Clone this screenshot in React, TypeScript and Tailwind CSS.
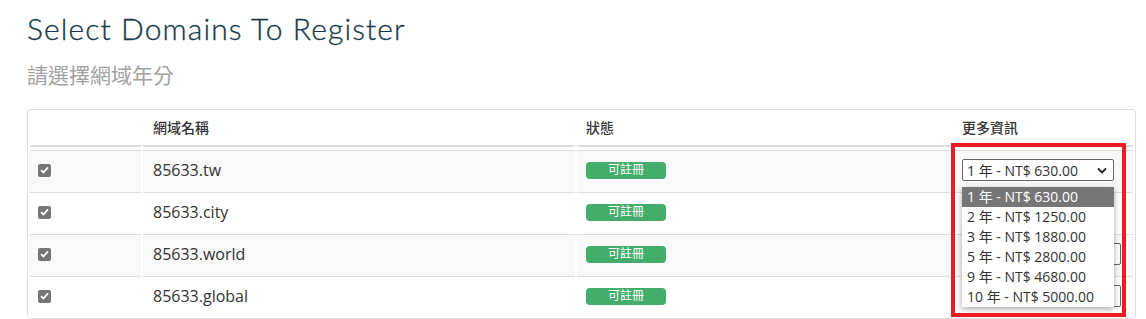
import React from "react";

const domains = [
  { name: "85633.tw", wide: false },
  { name: "85633.city", wide: false },
  { name: "85633.world", wide: true },
  { name: "85633.global", wide: true },
];

const options = [
  "1 年 - NT$ 630.00",
  "2 年 - NT$ 1250.00",
  "3 年 - NT$ 1880.00",
  "5 年 - NT$ 2800.00",
  "9 年 - NT$ 4680.00",
  "10 年 - NT$ 5000.00",
];

const Chevron = () => (
  <svg width="10" height="7" viewBox="0 0 10 7" className="shrink-0">
    <path d="M1 1.5 L5 5.5 L9 1.5" fill="none" stroke="#222" strokeWidth="1.8" />
  </svg>
);

const Check = () => (
  <span className="flex h-[13px] w-[13px] items-center justify-center rounded-[2px] bg-[#767676]">
    <svg width="9" height="8" viewBox="0 0 9 8">
      <path d="M1 4.2 L3.4 6.5 L8 1.3" fill="none" stroke="#fff" strokeWidth="1.8" />
    </svg>
  </span>
);

const App = () => {
  return (
    <div className="relative h-[319px] w-[1146px] overflow-hidden bg-white font-['Open_Sans','Noto_Sans_CJK_TC',sans-serif]">
      <div className="pl-[27px] pr-[10px]">
        <h1 className="pt-[10px] font-['Lato',sans-serif] text-[30px] font-light leading-[36px] tracking-[1.1px] text-[#173849] [-webkit-text-stroke:0.3px_#173849]">
          Select Domains To Register
        </h1>
        <p className="mt-[15px] text-[21px] leading-[28px] text-[#a2a2a2]">請選擇網域年分</p>

        <div className="mt-[20px] w-[1109px] rounded-[4px] border border-[#dddddd] px-[2px]">
          <div className="grid h-[37px] grid-cols-[111px_432px_373px_181px] gap-x-[2px] text-[14px] font-medium text-[#333]">
            <div className="border-b-2 border-[#dddddd]" />
            <div className="flex items-center border-b-2 border-[#dddddd] pl-[10px]">網域名稱</div>
            <div className="flex items-center border-b-2 border-[#dddddd] pl-[9px]">狀態</div>
            <div className="flex items-center border-b-2 border-[#dddddd] pl-[10px]">更多資訊</div>
          </div>
          <div className="mt-[3px]">
            {domains.map((d, i) => (
              <div
                key={d.name}
                className="grid h-[42px] grid-cols-[111px_432px_373px_181px] gap-x-[2px]"
              >
                {[0, 1, 2, 3].map((c) => (
                  <div
                    key={c}
                    className={`flex items-center border-t border-[#dddddd] pb-[3px] ${
                      i % 2 === 0 ? "bg-[#f9f9f9]" : "bg-white"
                    } ${c === 0 ? "pl-[8px]" : c === 2 ? "pl-[9px]" : "pl-[10px]"}`}
                  >
                    {c === 0 && <Check />}
                    {c === 1 && <span className="text-[16px] text-[#333]">{d.name}</span>}
                    {c === 2 && (
                      <span className="flex h-[17px] w-[80px] items-center justify-center rounded-[4px] bg-[#44ad6b] text-[12px] leading-none text-white">
                        可註冊
                      </span>
                    )}
                    {c === 3 && (
                      <div
                        className={`flex h-[22px] items-center justify-between rounded-[2px] border border-[#666] bg-white pl-[4px] pr-[6px] text-[14px] text-[#333] ${
                          d.wide ? "w-[159px]" : "w-[152px]"
                        }`}
                      >
                        <span>{i === 0 ? "1 年 - NT$ 630.00" : ""}</span>
                        <Chevron />
                      </div>
                    )}
                  </div>
                ))}
              </div>
            ))}
          </div>
        </div>
      </div>

      {/* open dropdown list */}
      <div className="absolute left-[962px] top-[187px] w-[152px] bg-white shadow-[0_2px_6px_rgba(0,0,0,0.35)]">
        {options.map((o, i) => (
          <div
            key={o}
            className={`h-[20px] pl-[5px] text-[14px] leading-[20px] ${
              i === 0 ? "bg-[#767676] text-white" : "text-[#333]"
            }`}
          >
            {o}
          </div>
        ))}
      </div>

      {/* highlight box */}
      <div className="pointer-events-none absolute left-[951px] top-[143px] h-[174px] w-[175px] border-4 border-[#ec1c24]" />
    </div>
  );
};

export default App;
